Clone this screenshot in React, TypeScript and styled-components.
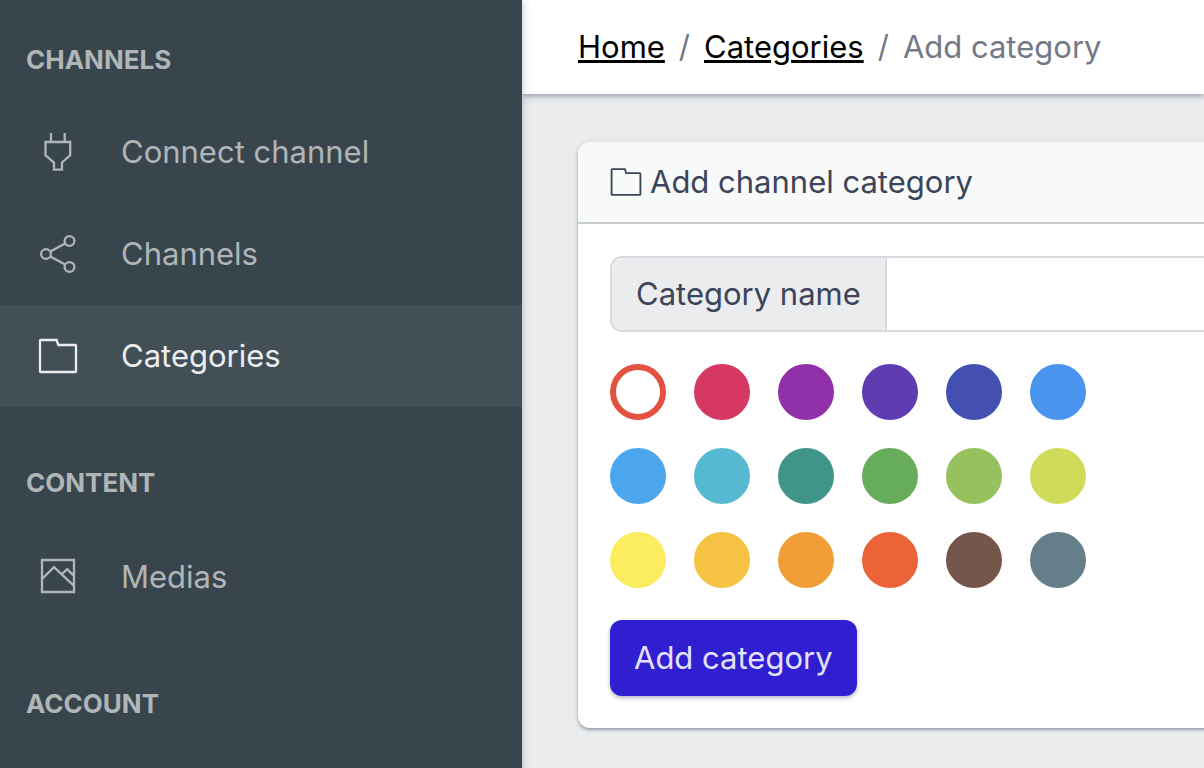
import React, { useState } from "react";
import styled, { createGlobalStyle } from "styled-components";

const GlobalStyle = createGlobalStyle`
  *, *::before, *::after { box-sizing: border-box; }
  body {
    margin: 0;
    background: #ebecee;
    color: #3c4459;
    font-family: Inter, "Liberation Sans", sans-serif;
    font-size: 31px;
    line-height: 48px;
  }
`;

const Shell = styled.div`
  display: flex;
  min-height: 100vh;
  overflow: hidden;
`;

const Sidebar = styled.nav`
  flex: 0 0 522px;
  background: #39454d;
  box-shadow: 0 0 8px rgba(60, 75, 100, 0.35);
  z-index: 1;
`;

const NavTitle = styled.h2<{ $first?: boolean }>`
  margin: 0;
  padding: ${(p) => (p.$first ? "40px 26px 22px" : "56px 26px 24px")};
  color: #b0b5b8;
  font-size: 26px;
  font-weight: 700;
  line-height: 39px;
  text-transform: uppercase;
`;

const NavList = styled.ul`
  margin: 0;
  padding: 0;
  list-style: none;
`;

const NavLink = styled.a<{ $active?: boolean }>`
  display: flex;
  align-items: center;
  gap: 43px;
  height: 102px;
  padding: 0 38px;
  color: ${(p) => (p.$active ? "#ebedee" : "#b0b5b8")};
  background: ${(p) => (p.$active ? "#434f56" : "transparent")};
  text-decoration: none;
`;

const Icon = styled.svg<{ $size: number }>`
  flex: none;
  width: ${(p) => p.$size}px;
  height: ${(p) => p.$size}px;
  fill: none;
  stroke: currentColor;
  stroke-width: 2.3;
`;

const Main = styled.div`
  flex: 1;
  min-width: 0;
`;

const Header = styled.header`
  padding: 23px 56px;
  background: #fff;
  box-shadow: 0 2px 6px rgba(60, 75, 100, 0.5);
`;

const Breadcrumb = styled.ol`
  display: flex;
  gap: 14px;
  margin: 0;
  padding: 0;
  list-style: none;
  white-space: nowrap;
  color: #737985;
`;

const Crumb = styled.li`
  display: flex;
  gap: 14px;

  & + &::before {
    content: "/";
  }
`;

const CrumbLink = styled.a`
  color: #000;
  text-decoration: underline;
  text-decoration-thickness: 3px;
  text-underline-offset: 2px;
`;

const Content = styled.main`
  padding: 48px 56px;
`;

const Card = styled.section`
  min-width: 760px;
  border-radius: 12px;
  background: #fff;
  box-shadow: 0 2px 3px rgba(60, 75, 100, 0.4), 0 1px 6px rgba(60, 75, 100, 0.15);
`;

const CardHeader = styled.h1`
  display: flex;
  align-items: center;
  gap: 8px;
  margin: 0;
  padding: 16px 32px;
  border-bottom: 2px solid #c9ccd2;
  border-radius: 12px 12px 0 0;
  background: #f8faf9;
  font-size: 31px;
  font-weight: 400;
`;

const CardBody = styled.form`
  display: flex;
  flex-direction: column;
  align-items: flex-start;
  gap: 32px;
  padding: 32px;
`;

const InputGroup = styled.div`
  display: flex;
  align-self: stretch;
  border: 2px solid #d8dadf;
  border-radius: 12px;
  overflow: hidden;
`;

const InputLabel = styled.label`
  padding: 12px 24px;
  border-right: 2px solid #d8dadf;
  background: #ebecee;
`;

const TextInput = styled.input`
  flex: 1;
  min-width: 0;
  padding: 12px 24px;
  border: 0;
  outline: 0;
  background: #fff;
  color: inherit;
  font: inherit;
`;

const Swatches = styled.fieldset`
  display: grid;
  grid-template-columns: repeat(6, 56px);
  gap: 28px;
  margin: 0;
  padding: 0;
  border: 0;
`;

const Swatch = styled.input<{ $color: string }>`
  appearance: none;
  width: 56px;
  height: 56px;
  margin: 0;
  border: 28px solid ${(p) => p.$color};
  border-radius: 50%;
  cursor: pointer;

  &:checked {
    border-width: 6px;
  }
`;

const SubmitButton = styled.button`
  padding: 14px 24px;
  border: 0;
  border-radius: 12px;
  background: #2f1fd1;
  color: #e5e1fb;
  box-shadow: 0 2px 4px rgba(60, 75, 100, 0.4);
  font: inherit;
  cursor: pointer;
`;

function PlugIcon() {
  return (
    <Icon $size={40} viewBox="0 0 40 40" aria-hidden="true">
      <path d="M13 1v9M26.7 1v9M7.5 10h24.7v13.3L24 30.5v7.2h-8v-7.2l-8.5-7.2z" />
    </Icon>
  );
}

function ShareIcon() {
  return (
    <Icon $size={40} viewBox="0 0 40 40" aria-hidden="true">
      <circle cx="8" cy="20" r="4.9" />
      <circle cx="31.5" cy="7" r="4.9" />
      <circle cx="31.5" cy="33" r="4.9" />
      <path d="M12.3 17.6 27.2 9.4M12.3 22.4l14.9 8.2" />
    </Icon>
  );
}

function FolderIcon({ size = 40 }: { size?: number }) {
  return (
    <Icon $size={size} viewBox="0 0 40 40" aria-hidden="true">
      <path d="M2.8 4h15.8l1.7 5h16.9q.8 0 .8.8v25.4q0 .8-.8.8H2.8q-.8 0-.8-.8V4.8q0-.8.8-.8z" />
    </Icon>
  );
}

function ImageIcon() {
  return (
    <Icon $size={40} viewBox="0 0 40 40" aria-hidden="true">
      <path d="M4 3h32v32H4zM4 21.8 16 10.2l20 18.6M23.8 17.2l5.4-5 6.8 6.6" />
    </Icon>
  );
}

const COLORS: [string, string][] = [
  ["Red", "#e25241"],
  ["Pink", "#d63864"],
  ["Purple", "#9031aa"],
  ["Deep purple", "#613cb0"],
  ["Indigo", "#4350af"],
  ["Blue", "#4994ec"],
  ["Light blue", "#4ba6ee"],
  ["Cyan", "#54b9d1"],
  ["Teal", "#419488"],
  ["Green", "#67ad5b"],
  ["Light green", "#97c15c"],
  ["Lime", "#d0dc59"],
  ["Yellow", "#fced60"],
  ["Amber", "#f6c244"],
  ["Orange", "#f19d38"],
  ["Deep orange", "#ec6337"],
  ["Brown", "#74564a"],
  ["Blue grey", "#667d8a"],
];

export default function App() {
  const [color, setColor] = useState("Red");
  const [name, setName] = useState("");

  return (
    <>
      <GlobalStyle />
      <Shell>
        <Sidebar>
          <NavTitle $first>Channels</NavTitle>
          <NavList>
            <li><NavLink href="#connect"><PlugIcon />Connect channel</NavLink></li>
            <li><NavLink href="#channels"><ShareIcon />Channels</NavLink></li>
            <li><NavLink href="#categories" $active><FolderIcon />Categories</NavLink></li>
          </NavList>
          <NavTitle>Content</NavTitle>
          <NavList>
            <li><NavLink href="#medias"><ImageIcon />Medias</NavLink></li>
          </NavList>
          <NavTitle>Account</NavTitle>
        </Sidebar>
        <Main>
          <Header>
            <Breadcrumb>
              <Crumb><CrumbLink href="#home">Home</CrumbLink></Crumb>
              <Crumb><CrumbLink href="#categories">Categories</CrumbLink></Crumb>
              <Crumb>Add category</Crumb>
            </Breadcrumb>
          </Header>
          <Content>
            <Card>
              <CardHeader><FolderIcon size={32} />Add channel category</CardHeader>
              <CardBody onSubmit={(e) => e.preventDefault()}>
                <InputGroup>
                  <InputLabel htmlFor="category-name">Category name</InputLabel>
                  <TextInput
                    id="category-name"
                    type="text"
                    value={name}
                    onChange={(e) => setName(e.target.value)}
                  />
                </InputGroup>
                <Swatches aria-label="Category color">
                  {COLORS.map(([label, value]) => (
                    <Swatch
                      key={label}
                      type="radio"
                      name="color"
                      aria-label={label}
                      $color={value}
                      checked={color === label}
                      onChange={() => setColor(label)}
                    />
                  ))}
                </Swatches>
                <SubmitButton type="submit">Add category</SubmitButton>
              </CardBody>
            </Card>
          </Content>
        </Main>
      </Shell>
    </>
  );
}
